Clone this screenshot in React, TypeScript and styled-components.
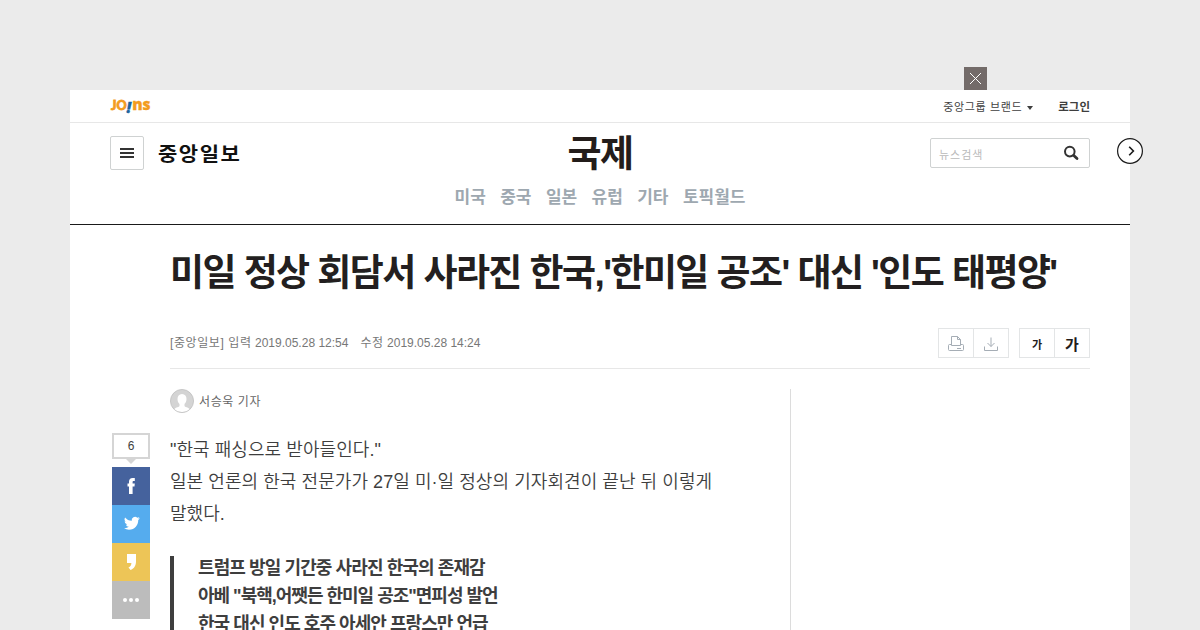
import React from "react";
import styled, { createGlobalStyle } from "styled-components";

const GlobalStyle = createGlobalStyle`
  * {
    box-sizing: border-box;
  }
  body {
    margin: 0;
    background: #ebebeb;
    font-family: "Liberation Sans", "Noto Sans CJK KR", sans-serif;
    color: #3e3e3e;
  }
`;

const Page = styled.div`
  height: 630px;
  padding-top: 90px;
  overflow: hidden;
`;

const Wrap = styled.div`
  position: relative;
  width: 1060px;
  height: 540px;
  margin: 0 auto;
  background: #fff;
`;

const CloseButton = styled.button`
  position: absolute;
  top: -23px;
  left: 894px;
  width: 23px;
  height: 23px;
  padding: 0;
  border: 0;
  background: #736b69;
  svg {
    display: block;
  }
`;

const NextButton = styled.button`
  position: absolute;
  top: 48px;
  right: -13px;
  width: 26px;
  height: 26px;
  padding: 0;
  border: 0;
  background: none;
  svg {
    display: block;
  }
`;

const TopBar = styled.div`
  display: flex;
  align-items: center;
  justify-content: space-between;
  height: 33px;
  padding: 0 40px;
  border-bottom: 1px solid #e7e7e7;
`;

const Joins = styled.div`
  display: flex;
  align-items: baseline;
  margin: -2px 0 0 1px;
  color: #f39c1f;
  font-family: "Open Sans", sans-serif;
  font-size: 15.5px;
  font-weight: 800;
  line-height: 20px;
  -webkit-text-stroke: 0.3px #f39c1f;
`;

const JoinsCap = styled.span`
  font-family: Lato, sans-serif;
  font-size: 12.5px;
  font-weight: 900;
  -webkit-text-stroke: 0.8px #f39c1f;
`;

const JoinsMark = styled.span`
  margin-right: 1px;
  color: #20649c;
  font-size: 15px;
  font-style: italic;
  transform: translateY(3px);
  -webkit-text-stroke: 0.4px #20649c;
`;

const TopMenu = styled.div`
  display: flex;
  align-items: center;
  margin-top: 2px;
  font-size: 11px;
  line-height: 16px;
`;

const Brand = styled.span`
  letter-spacing: 0.65px;
`;

const Arrow = styled.span`
  margin: 1px 25px 0 5px;
  border: 3.5px solid transparent;
  border-top: 4px solid #3e3e3e;
  border-bottom: 0;
`;

const Login = styled.b`
  font-size: 11.5px;
`;

const Header = styled.header`
  display: grid;
  grid-template-columns: 200px 1fr 200px;
  height: 102px;
  padding: 0 40px;
  border-bottom: 1px solid #1a1a1a;
`;

const HeaderLeft = styled.div`
  display: flex;
  align-items: center;
  height: 34px;
  margin-top: 13px;
`;

const MenuButton = styled.button`
  display: flex;
  flex-direction: column;
  align-items: center;
  justify-content: center;
  gap: 2px;
  width: 34px;
  height: 34px;
  padding: 0;
  border: 1px solid #cfd2d2;
  border-radius: 2px;
  background: #fff;
`;

const MenuLine = styled.span`
  width: 14px;
  height: 2px;
  background: #333;
`;

const Logo = styled.div`
  margin-left: 14px;
  color: #111;
  font-family: "Noto Sans CJK KR", sans-serif;
  font-size: 21px;
  font-weight: 700;
  line-height: 34px;
  letter-spacing: 1.5px;
  transform: scaleY(0.9);
`;

const HeaderCenter = styled.div`
  text-align: center;
`;

const Section = styled.h2`
  margin: 11px 0 0;
  color: #231c1a;
  font-size: 37px;
  font-weight: 700;
  line-height: 42px;
  letter-spacing: -1.6px;
`;

const SubNav = styled.nav`
  display: flex;
  justify-content: center;
  gap: 14.4px;
  margin-top: 10px;
  color: #9ea8b0;
  font-size: 17px;
  font-weight: 700;
  line-height: 24px;
`;

const Search = styled.div`
  display: flex;
  align-items: center;
  justify-content: space-between;
  justify-self: end;
  width: 160px;
  height: 30px;
  margin-top: 15px;
  padding: 0 10px 0 8px;
  border: 1px solid #cfd2d2;
  border-radius: 2px;
  color: #bababa;
  font-size: 11px;
  line-height: 16px;
`;

const Placeholder = styled.span`
  margin-top: 4px;
  letter-spacing: 1px;
`;

const Article = styled.article`
  position: relative;
  padding: 25px 40px 0 100px;
`;

const Headline = styled.h1`
  margin: 0;
  color: #231f20;
  font-size: 37px;
  font-weight: 700;
  line-height: 48px;
  letter-spacing: -1.57px;
  white-space: nowrap;
`;

const Byline = styled.div`
  display: flex;
  align-items: center;
  justify-content: space-between;
  height: 71px;
  padding-top: 20px;
  border-bottom: 1px solid #e7e7e7;
  color: #777;
  font-size: 12px;
`;

const Dates = styled.div`
  display: flex;
  gap: 12px;
  line-height: 18px;
`;

const Label = styled.span`
  letter-spacing: 0.6px;
`;

const Tools = styled.div`
  display: flex;
  gap: 10px;
`;

const ToolGroup = styled.div`
  display: flex;
  border: 1px solid #e3e5e6;
`;

const Tool = styled.button<{ $size?: number }>`
  display: flex;
  align-items: center;
  justify-content: center;
  width: 34px;
  height: 28px;
  padding: 1px 0 0;
  border: 0;
  background: none;
  color: #231c1a;
  font-family: "Noto Sans CJK KR", sans-serif;
  font-size: ${(p) => p.$size || 12}px;
  font-weight: 700;
  line-height: 18px;
  & + & {
    width: 35px;
    border-left: 1px solid #e3e5e6;
  }
`;

const Columns = styled.div`
  display: flex;
  padding-top: 20px;
`;

const Main = styled.div`
  width: 621px;
  height: 241px;
  border-right: 1px solid #dcdcdc;
`;

const Reporter = styled.div`
  display: flex;
  align-items: center;
  gap: 5px;
  height: 24px;
  color: #666;
  font-size: 12px;
  line-height: 20px;
  letter-spacing: 0.6px;
`;

const Name = styled.span`
  padding-top: 2px;
`;

const Body = styled.p`
  margin: 21px 0 0;
  font-size: 18px;
  font-weight: 350;
  line-height: 32px;
  letter-spacing: 0.06px;
  white-space: nowrap;
`;

const Line = styled.span<{ $letter?: number }>`
  display: block;
  ${(p) => p.$letter !== undefined && `letter-spacing: ${p.$letter}px;`}
`;

const Quote = styled.blockquote`
  margin: 26px 0 0;
  padding-left: 24px;
  border-left: 4px solid #3e3e3e;
  font-size: 18px;
  font-weight: 700;
  line-height: 28px;
  white-space: nowrap;
`;

const QuoteText = styled.div`
  transform: translateY(-2px);
`;

const Share = styled.aside`
  position: absolute;
  top: 208px;
  left: 42px;
  width: 38px;
`;

const Count = styled.div`
  position: relative;
  height: 26px;
  margin-bottom: 8px;
  border: 2px solid #d5d5d5;
  font-size: 12px;
  line-height: 22px;
  text-align: center;
  &::after {
    content: "";
    position: absolute;
    top: 24px;
    left: 12px;
    border: 5px solid transparent;
    border-top-color: #d5d5d5;
    border-bottom: 0;
  }
`;

const ShareButton = styled.button<{ $bg: string }>`
  display: block;
  width: 38px;
  height: 38px;
  padding: 0;
  border: 0;
  background: ${(p) => p.$bg};
  svg {
    display: block;
  }
`;

const subjects = ["미국", "중국", "일본", "유럽", "기타", "토픽월드"];

const App = () => {
  return (
    <Page>
      <GlobalStyle />
      <Wrap>
        <TopBar>
          <Joins>
            <JoinsCap>JO</JoinsCap>
            <JoinsMark>!</JoinsMark>
            ns
          </Joins>
          <TopMenu>
            <Brand>중앙그룹 브랜드</Brand>
            <Arrow />
            <Login>로그인</Login>
          </TopMenu>
        </TopBar>
        <Header>
          <HeaderLeft>
            <MenuButton aria-label="menu">
              <MenuLine />
              <MenuLine />
              <MenuLine />
            </MenuButton>
            <Logo>중앙일보</Logo>
          </HeaderLeft>
          <HeaderCenter>
            <Section>국제</Section>
            <SubNav>
              {subjects.map((s) => (
                <span key={s}>{s}</span>
              ))}
            </SubNav>
          </HeaderCenter>
          <Search>
            <Placeholder>뉴스검색</Placeholder>
            <svg width="16" height="16" viewBox="0 0 16 16" fill="none">
              <circle cx="6.8" cy="6.6" r="4.8" stroke="#333" strokeWidth="2" />
              <path
                d="M10.8 10.6l3.2 3"
                stroke="#333"
                strokeWidth="2.8"
                strokeLinecap="round"
              />
            </svg>
          </Search>
        </Header>

        <Article>
          <Headline>
            미일 정상 회담서 사라진 한국,'한미일 공조' 대신 '인도 태평양'
          </Headline>
          <Byline>
            <Dates>
              <span>
                <Label>[중앙일보] 입력</Label> 2019.05.28 12:54
              </span>
              <span>
                <Label>수정</Label> 2019.05.28 14:24
              </span>
            </Dates>
            <Tools>
              <ToolGroup>
                <Tool aria-label="print">
                  <svg width="16" height="16" viewBox="0 0 16 16" fill="none" stroke="#a5adb5">
                    <path d="M3.5 8.5h-2a1 1 0 0 0-1 1v4a1 1 0 0 0 1 1h13a1 1 0 0 0 1-1v-4a1 1 0 0 0-1-1h-2M3.5 9.5V.5h6l3 3v6zM9.5.5v3h3M9 12.5h4" />
                  </svg>
                </Tool>
                <Tool aria-label="download">
                  <svg width="14" height="16" viewBox="0 0 14 16" fill="none" stroke="#a5adb5">
                    <path d="M.5 10.5v4h13v-4M7 1.5v9M3.5 7L7 10.5 10.5 7" />
                  </svg>
                </Tool>
              </ToolGroup>
              <ToolGroup>
                <Tool $size={11}>가</Tool>
                <Tool $size={15}>가</Tool>
              </ToolGroup>
            </Tools>
          </Byline>
          <Columns>
            <Main>
              <Reporter>
                <svg width="24" height="24" viewBox="0 0 24 24">
                  <circle cx="12" cy="12" r="11.5" fill="#d4d4d4" stroke="#c6c6c6" />
                  <path
                    d="M12 5c-3 0-4.5 2.2-4.5 5 0 2.2.8 4 2 5v2c0 1-4 1.3-5 3.2A11 11 0 0 0 12 23a11 11 0 0 0 7.5-2.8c-1-1.9-5-2.2-5-3.2v-2c1.2-1 2-2.8 2-5 0-2.8-1.5-5-4.5-5z"
                    fill="#fff"
                  />
                </svg>
                <Name>서승욱 기자</Name>
              </Reporter>
              <Body>
                <Line>"한국 패싱으로 받아들인다."</Line>
                <Line>
                  일본 언론의 한국 전문가가 27일 미·일 정상의 기자회견이 끝난 뒤 이렇게
                </Line>
                <Line>말했다.</Line>
              </Body>
              <Quote>
                <QuoteText>
                  <Line $letter={-0.9}>트럼프 방일 기간중 사라진 한국의 존재감</Line>
                  <Line $letter={-1}>아베 "북핵,어쨋든 한미일 공조"면피성 발언</Line>
                  <Line $letter={-0.95}>한국 대신 인도 호주 아세안 프랑스만 언급</Line>
                </QuoteText>
              </Quote>
            </Main>
          </Columns>
          <Share>
            <Count>6</Count>
            <ShareButton $bg="#45629d" aria-label="facebook">
              <svg width="38" height="38" viewBox="0 0 38 38" fill="#fff">
                <path d="M17 27v-7.5H15.500v-3H17v-1.700c0-2.500 1.200-3.800 3.600-3.800h2.200v3h-1.200c-.8 0-1 .3-1 1.200v1.300h2.200l-.3 3h-1.900V27z" />
              </svg>
            </ShareButton>
            <ShareButton $bg="#55acee" aria-label="twitter">
              <svg width="38" height="38" viewBox="0 0 38 38">
                <path
                  transform="translate(12 10.3) scale(.66)"
                  fill="#fff"
                  d="M23.950 4.570a10 10 0 0 1-2.820.77 4.960 4.960 0 0 0 2.160-2.720c-.95.550-2 .95-3.130 1.180a4.920 4.920 0 0 0-8.380 4.480C7.690 8.090 4.070 6.130 1.640 3.160a4.920 4.920 0 0 0 1.520 6.570 4.900 4.900 0 0 1-2.230-.61v.06a4.920 4.920 0 0 0 3.950 4.830 5 5 0 0 1-2.210.08 4.940 4.940 0 0 0 4.600 3.420A9.870 9.870 0 0 1 0 19.540a14 14 0 0 0 7.550 2.210c9.050 0 14-7.500 14-13.980 0-.21 0-.42-.02-.63a9.940 9.940 0 0 0 2.460-2.550z"
                />
              </svg>
            </ShareButton>
            <ShareButton $bg="#edc557" aria-label="kakaostory">
              <svg width="38" height="38" viewBox="0 0 38 38">
                <path
                  fill="#fff"
                  d="M15 11h9v7.5c0 4.5-2.2 7.2-5.5 8.5L16.5 24.5c1.9-1 2.9-2.5 2.9-4.5H15z"
                />
              </svg>
            </ShareButton>
            <ShareButton $bg="#bcbcbc" aria-label="more">
              <svg width="38" height="38" viewBox="0 0 38 38" fill="#fff">
                <circle cx="13" cy="19" r="2" />
                <circle cx="19" cy="19" r="2" />
                <circle cx="25" cy="19" r="2" />
              </svg>
            </ShareButton>
          </Share>
        </Article>

        <CloseButton aria-label="close">
          <svg width="23" height="23" viewBox="0 0 23 23" fill="none" stroke="#fff">
            <path d="M6 6l11 11M17 6L6 17" />
          </svg>
        </CloseButton>
        <NextButton aria-label="next">
          <svg width="26" height="26" viewBox="0 0 26 26" fill="none">
            <circle cx="13" cy="13" r="12.4" fill="#fff" stroke="#1a1a1a" strokeWidth="1.2" />
            <path d="M12.2 8.7l4.2 4.3-4.2 4.3" stroke="#1a1a1a" strokeWidth="1.6" />
          </svg>
        </NextButton>
      </Wrap>
    </Page>
  );
};

export default App;
